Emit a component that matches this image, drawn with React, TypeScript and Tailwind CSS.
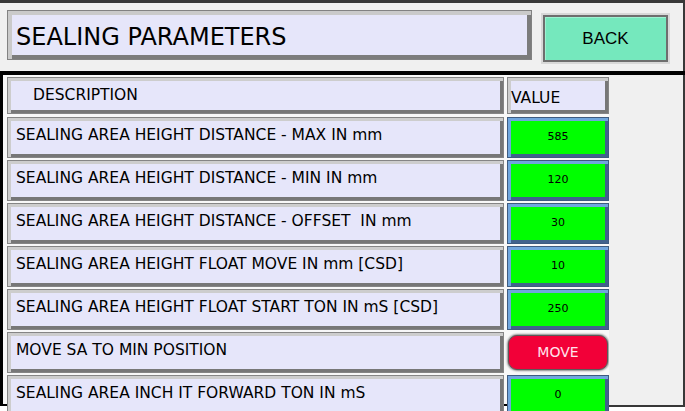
import React from "react";

const descCell =
  "w-[497px] h-[41px] shrink-0 bg-[#e6e6fa] border border-[#858585] shadow-[inset_3px_3px_0_#cdcdcd,inset_-3px_-3px_0_#777777] pl-[8px] pt-[8px] text-[15.5px] leading-[18px] text-black whitespace-pre";
const valueCell =
  "w-[102px] h-[41px] shrink-0 ml-[3px] bg-[#00ff00] border border-[#3e5b80] shadow-[inset_3px_3px_0_#70a6dd,inset_-3px_-3px_0_#41628c] flex items-center justify-center text-[11px] text-black";

const rows: { d: string; v?: string }[] = [
  { d: "SEALING AREA HEIGHT DISTANCE - MAX IN mm", v: "585" },
  { d: "SEALING AREA HEIGHT DISTANCE - MIN IN mm", v: "120" },
  { d: "SEALING AREA HEIGHT DISTANCE - OFFSET  IN mm", v: "30" },
  { d: "SEALING AREA HEIGHT FLOAT MOVE IN mm [CSD]", v: "10" },
  { d: "SEALING AREA HEIGHT FLOAT START TON IN mS [CSD]", v: "250" },
  { d: "MOVE SA TO MIN POSITION" },
  { d: "SEALING AREA INCH IT FORWARD TON IN mS", v: "0" },
];

export default function App() {
  return (
    <div className="w-[685px] h-[411px] overflow-hidden bg-white font-['DejaVu_Sans',sans-serif]">
      {/* top panel */}
      <div className="h-[71px] bg-[#f0f0f0] border-t-[3px] border-r-[2px] border-[#383838] flex items-start pl-[7px] pt-[7px]">
        <div className="w-[525px] h-[50px] bg-[#e6e6fa] border border-[#828282] shadow-[inset_4px_4px_0_#cacaca,inset_-4px_-4px_0_#7c7c7c] flex items-center pl-[8px] pt-[3px] text-[24px] text-black">
          SEALING PARAMETERS
        </div>
        <div className="ml-[11px] mt-[5px] w-[125px] h-[47px] bg-[#75e8bd] border-2 border-[#6e6e6e] shadow-[0_0_0_2px_#d8d8d8,inset_1px_1px_0_#9ef2d2] flex items-center justify-center font-['Liberation_Sans',sans-serif] text-[17px] text-black">
          BACK
        </div>
      </div>
      <div className="h-[4px] bg-black" />
      {/* table area */}
      <div className="flex h-[332px] items-start">
        <div className="w-[609px] h-[331px] shrink-0 border-l-[3px] border-b-[2px] border-black bg-[#f8f8f8] pl-[4px] pt-[2px] flex flex-col gap-[2px]">
          <div className="flex h-[37px] shrink-0 mb-[1px]">
            <div className="w-[497px] h-[37px] shrink-0 bg-[#e6e6fa] border border-[#858585] shadow-[inset_3px_3px_0_#cdcdcd,inset_-3px_-3px_0_#777777] flex items-center pl-[25px] text-[15.5px] text-black">
              DESCRIPTION
            </div>
            <div className="w-[102px] h-[37px] shrink-0 ml-[3px] bg-[#e6e6fa] border border-[#858585] shadow-[inset_3px_3px_0_#cdcdcd,inset_-3px_-3px_0_#777777] flex items-center pl-[3px] pt-[7px] text-[15.5px] text-black">
              VALUE
            </div>
          </div>
          {rows.map((r, i) => (
            <div key={i} className="flex h-[41px] shrink-0">
              <div className={descCell}>{r.d}</div>
              {r.v !== undefined ? (
                <div className={valueCell}>{r.v}</div>
              ) : (
                <div className="w-[102px] h-[41px] shrink-0 ml-[3px] flex items-center justify-center">
                  <div className="w-[100px] h-[35px] rounded-[9px] bg-[#f20038] border border-[#5a5a5a] shadow-[0_0_2px_1px_#8a8a8a] flex items-center justify-center text-[14px] text-[#ffe4ec]">
                    MOVE
                  </div>
                </div>
              )}
            </div>
          ))}
        </div>
        <div className="flex-1 h-[332px] bg-[#f0f0f0] border-r-[2px] border-b-[2px] border-[#383838]" />
      </div>
    </div>
  );
}
